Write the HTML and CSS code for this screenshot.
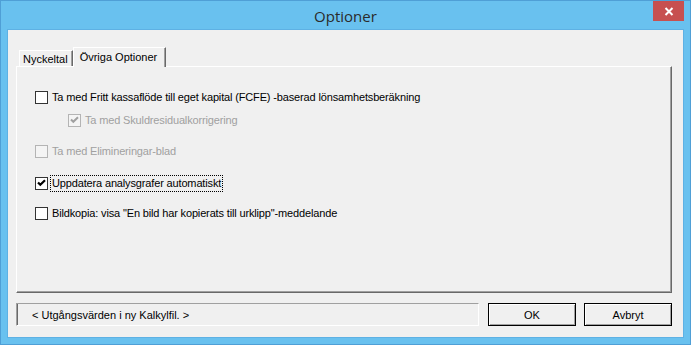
FILE: index.html
```html
<!DOCTYPE html>
<html>
  <head>
    <title>Optioner</title>
    <link rel="stylesheet" href="styles.css">
  </head>
  <body>

    <div class="window">
      <div class="titlebar">
        <span class="title">Optioner</span>
        <i class="window-close">
          <svg width="10" height="9" viewBox="0 0 10 9"><path d="M1.5 1 L8.5 8 M8.5 1 L1.5 8" stroke="#fff" stroke-width="2" fill="none"/></svg>
        </i>
      </div>

      <main class="client">
        <div class="tabs">
          <span class="tab">Nyckeltal</span>
          <span class="tab tab-active">Övriga Optioner</span>
        </div>

        <section class="panel">
          <label class="option row-1">
            <span class="check"></span>
            <span class="caption">Ta med Fritt kassaflöde till eget kapital (FCFE) -baserad lönsamhetsberäkning</span>
          </label>
          <label class="option row-2 indent disabled">
            <span class="check">
              <svg width="11" height="11" viewBox="0 0 11 11"><path d="M2 4.5 L4.3 6.8 L9 2.2" stroke="#a0a0a0" stroke-width="2" fill="none"/></svg>
            </span>
            <span class="caption">Ta med Skuldresidualkorrigering</span>
          </label>
          <label class="option row-3 disabled">
            <span class="check"></span>
            <span class="caption">Ta med Elimineringar-blad</span>
          </label>
          <label class="option row-4">
            <span class="check">
              <svg width="11" height="11" viewBox="0 0 11 11"><path d="M2 4.5 L4.3 6.8 L9 2.2" stroke="#000" stroke-width="2.2" fill="none"/></svg>
            </span>
            <span class="caption focused">Uppdatera analysgrafer automatiskt</span>
          </label>
          <label class="option row-5">
            <span class="check"></span>
            <span class="caption">Bildkopia: visa "En bild har kopierats till urklipp"-meddelande</span>
          </label>
        </section>

        <footer class="footer">
          <div class="status">&lt; Utgångsvärden i ny Kalkylfil. &gt;</div>
          <button class="button button-ok">OK</button>
          <button class="button button-cancel">Avbryt</button>
        </footer>
      </main>
    </div>

  </body>
</html>
```

FILE: styles.css
```css
*,
*:before,
*:after {
  box-sizing: border-box;
}

html,
body {
  height: 100%;
}

body {
  margin: 0px;
  background: #fff;
  color: #000;
  font-family: 'Liberation Sans', Arial, sans-serif;
  font-size: 11px;
}

.window {
  position: relative;
  display: flex;
  flex-flow: column;
  width: 691px;
  height: 345px;
  background: #69c1ef;
  border: 1px solid #4f9fd6;
  padding: 0px 7px 7px 7px;
}

.titlebar {
  display: flex;
  align-items: center;
  justify-content: center;
  height: 29px;
  flex: none;
}

.title {
  font-family: 'Open Sans', 'Noto Sans', sans-serif;
  font-size: 15px;
  color: #2b2b2b;
  margin-top: 1px;
}

.window-close {
  position: absolute;
  top: 0px;
  right: 6px;
  display: flex;
  justify-content: center;
  align-items: center;
  width: 31px;
  height: 20px;
  background: #c75050;
}

.client {
  flex: 1;
  display: flex;
  flex-flow: column;
  background: #f0f0f0;
  padding: 17px 11px 11px 8px;
  box-shadow: 0px 0px 0px 1px #5eb1e4;
}

/* tabs */

.tabs {
  display: flex;
  align-items: flex-end;
  height: 19px;
  padding-left: 3px;
  flex: none;
}

.tab {
  position: relative;
  height: 16px;
  padding: 1px 4px 0px 3px;
  border: 1px solid;
  border-color: #fff #696969 transparent #fff;
  border-bottom: 0px;
  box-shadow: inset -1px 0px #a0a0a0;
  line-height: 14px;
}

.tab-active {
  z-index: 2;
  height: 20px;
  margin-bottom: -1px;
  padding: 2px 8px 0px 6px;
  background: #f0f0f0;
}

.panel {
  height: 227px;
  flex: none;
  border: 1px solid;
  border-color: #fff #696969 #696969 #fff;
  box-shadow: inset -1px -1px #a0a0a0;
  padding: 21px 0px 0px 18px;
}

/* checkboxes */

.option {
  display: flex;
  align-items: center;
  height: 18px;
}

.row-2 { margin-top: 5px; }
.row-3 { margin-top: 13px; }
.row-4 { margin-top: 14px; }
.row-5 { margin-top: 12px; }

.indent {
  margin-left: 33px;
}

.check {
  display: flex;
  width: 13px;
  height: 13px;
  flex: none;
  background: #fff;
  border: 1px solid #333;
}

.caption {
  margin-left: 2px;
  padding: 1px 1px 2px 1px;
  border: 1px dotted transparent;
  white-space: nowrap;
  letter-spacing: -0.15px;
}

.focused {
  border-color: #000;
}

.disabled .check {
  background: #f4f4f4;
  border-color: #b4b4b4;
}

.disabled .caption {
  color: #a0a0a0;
}

/* footer */

.footer {
  display: flex;
  height: 23px;
  margin-top: 10px;
  flex: none;
}

.status {
  display: flex;
  align-items: center;
  width: 463px;
  padding-left: 15px;
  border: 1px solid;
  border-color: #a0a0a0 #fff #fff #a0a0a0;
  box-shadow: inset 1px 0px #696969;
}

.button {
  width: 88px;
  height: 23px;
  margin: 0px;
  padding: 0px;
  background: #f0f0f0;
  border: 1px solid #000;
  box-shadow: inset 1px 1px #fff, inset -1px -1px #a0a0a0;
  font-family: inherit;
  font-size: 11px;
  color: #000;
}

.button-ok {
  margin-left: 9px;
}

.button-cancel {
  margin-left: 8px;
}
```
